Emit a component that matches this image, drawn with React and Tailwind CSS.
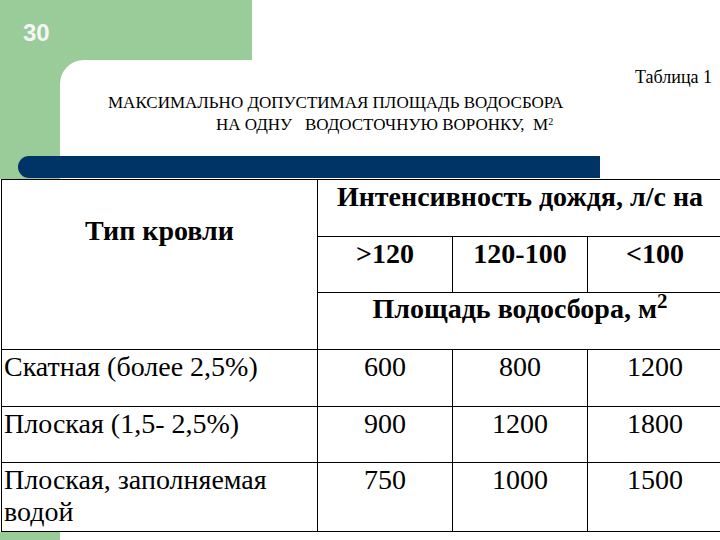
const SERIF = "font-['Liberation_Serif',serif]";

const rows = [
    { name: 'Скатная (более 2,5%)', values: ['600', '800', '1200'] },
    { name: 'Плоская (1,5- 2,5%)', values: ['900', '1200', '1800'] },
    { name: 'Плоская, заполняемая водой', values: ['750', '1000', '1500'] },
];

// every text box names its own family: it is not picked up from a parent here
const Cell = ({ className, children }) => (
    <div className={`bg-white leading-[32px] text-[28px] ${SERIF} ${className}`}>{children}</div>
);

const Sup = ({ className = '' }) => <sup className={`${SERIF} ${className}`}>2</sup>;

const App = () => {
    return (
        <div className="w-[720px] h-[540px] overflow-hidden bg-white flex flex-col text-black">
            {/* slide number */}
            <div className="flex h-[60px] shrink-0">
                <div className="w-[252px] bg-[#99cc99] pl-[23px] pt-[15px] font-['Liberation_Sans',sans-serif] font-bold text-[24px] leading-normal text-[#f6f6f6]">
                    30
                </div>
            </div>

            {/* heading */}
            <div className="flex h-[96px] shrink-0 bg-[#99cc99]">
                <div className="w-[60px] shrink-0" />
                <div className="flex-1 bg-white rounded-tl-[24px]">
                    <div className={`${SERIF} text-right pr-[8px] pt-[4px] text-[18px] leading-normal`}>Таблица 1</div>
                    <div className="mt-[1px] text-[17px] leading-[22px] whitespace-pre">
                        <div className={`${SERIF} pl-[48px]`}>МАКСИМАЛЬНО ДОПУСТИМАЯ ПЛОЩАДЬ ВОДОСБОРА</div>
                        <div className={`${SERIF} pl-[156px]`}>
                            НА ОДНУ   ВОДОСТОЧНУЮ ВОРОНКУ,  М<Sup className="text-[10px]" />
                        </div>
                    </div>
                </div>
            </div>

            {/* dark bar */}
            <div className="flex h-[23px] shrink-0">
                <div className="w-[60px] shrink-0 bg-[#99cc99]" />
                <div className="relative -ml-[42px] w-[582px] h-[22px] bg-[#003366] rounded-l-full" />
            </div>

            {/* table */}
            <div className="shrink-0 pl-[1px] bg-white">
                <div className="grid w-[722px] grid-cols-[315px_134px_134px_134px] grid-rows-[56px_55px_56px_56px_55px_68px] gap-px bg-black border border-black">
                    <Cell className="row-span-3 text-center font-bold pt-[35px]">Тип кровли</Cell>
                    <Cell className="col-span-3 text-center font-bold pt-px">Интенсивность дождя, л/с на</Cell>
                    <Cell className="text-center font-bold pt-px">&gt;120</Cell>
                    <Cell className="text-center font-bold pt-px">120-100</Cell>
                    <Cell className="text-center font-bold pt-px">&lt;100</Cell>
                    <Cell className="col-span-3 text-center font-bold pt-0">
                        Площадь водосбора, м<Sup className="font-bold" />
                    </Cell>
                    {rows.map((row) => (
                        <div key={row.name} className="contents">
                            <Cell className="pl-[2px] pt-px">{row.name}</Cell>
                            {row.values.map((v, i) => (
                                <Cell key={i} className="text-center pt-px">{v}</Cell>
                            ))}
                        </div>
                    ))}
                </div>
            </div>

            <div className="w-[60px] flex-1 bg-[#99cc99]" />
        </div>
    );
};

export default App;
